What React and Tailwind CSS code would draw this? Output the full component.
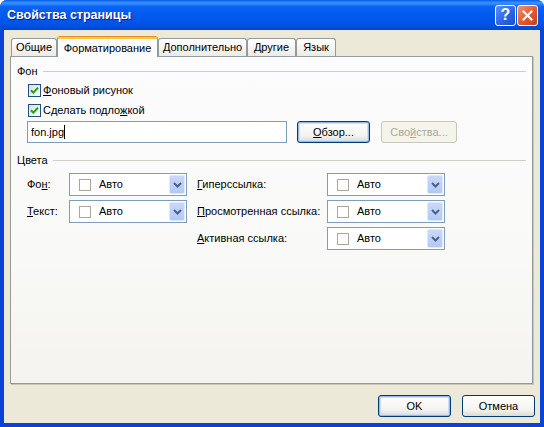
import React from 'react';

const font = "font-['Liberation_Sans',Arial,sans-serif]";

function Check() {
  return (
    <span className="w-[13px] h-[13px] border border-[#1C5180] bg-[linear-gradient(135deg,#DCDCD7_0%,#FFFFFF_100%)] flex items-center justify-center shrink-0">
      <svg width="9" height="9" viewBox="0 0 9 9">
        <path d="M1 4.2 L3.3 6.6 L8 1.8" fill="none" stroke="#21A121" strokeWidth="2" />
      </svg>
    </span>
  );
}

function Combo() {
  return (
    <div className="h-[23px] w-[118px] border border-[#7F9DB9] bg-white flex items-center p-px">
      <span className="ml-[8px] w-[12px] h-[12px] border border-[#ACA899] bg-white shrink-0" />
      <span className="ml-[8px] flex-1">Авто</span>
      <span className="w-[16px] h-full rounded-[2px] border border-[#E0E8FE] bg-[linear-gradient(to_bottom,#C9D8FC,#B2C9F6)] flex items-center justify-center">
        <svg width="9" height="6" viewBox="0 0 9 6">
          <path d="M1 1 L4.5 4.5 L8 1" fill="none" stroke="#4D6185" strokeWidth="2" />
        </svg>
      </span>
    </div>
  );
}

function Button({ children, disabled, def, w = 'w-[73px]' }) {
  return (
    <div
      className={
        'h-[22px] ' + w + ' rounded-[3px] border flex items-center justify-center ' +
        (disabled
          ? 'border-[#C9C7BA] bg-[#F5F4EA] text-[#ACA899]'
          : 'border-[#003C74] bg-[linear-gradient(to_bottom,#FFFFFF_0%,#F3F3EF_70%,#DCDAD0_100%)] text-black') +
        (def ? ' shadow-[inset_0_0_0_1px_#98B8EA,inset_0_0_0_2px_#CEDDF8]' : '')
      }
    >
      {children}
    </div>
  );
}

function Tab({ label, active, w }) {
  if (active) {
    return (
      <div className={'relative z-10 -mb-px h-[21px] ' + w + ' flex flex-col border-x border-[#919B9C] rounded-t-[3px] bg-[#FCFCFE] overflow-hidden'}>
        <div className="h-[3px] bg-[#FFC83C] border-t border-[#E68B2C]" />
        <div className="flex-1 flex items-center justify-center">{label}</div>
      </div>
    );
  }
  return (
    <div className={'h-[18px] ' + w + ' flex items-center justify-center border border-b-0 border-[#919B9C] rounded-t-[3px] bg-[linear-gradient(to_bottom,#FFFFFF,#ECEBE6)]'}>
      {label}
    </div>
  );
}

function Group({ title }) {
  return (
    <div className="h-[14px] flex items-center">
      <span>{title}</span>
      <span className="ml-[5px] flex-1 h-px bg-[#D0D0BF]" />
    </div>
  );
}

export default function App() {
  return (
    <div className={font + ' text-[11px] text-black w-[544px] h-[427px] flex flex-col bg-[#0842D6] rounded-t-[7px] overflow-hidden'}>
      {/* title bar */}
      <div className="h-[30px] shrink-0 flex items-center pl-[7px] pr-[6px] bg-[linear-gradient(to_bottom,#0A5DE8_0%,#3C93FF_10%,#0A63F4_22%,#0058EE_55%,#0054E6_80%,#0046CC_100%)]">
        <span className="flex-1 text-white font-bold text-[12.5px] [text-shadow:1px_1px_0_#0A1E8C]">Свойства страницы</span>
        <div className="flex gap-px">
          <div className="w-[21px] h-[21px] rounded-[3px] border border-white bg-[linear-gradient(135deg,#5E8FF5_0%,#2A62E4_60%,#1B4DCF_100%)] flex items-center justify-center text-white font-bold text-[16px] leading-none">?</div>
          <div className="w-[21px] h-[21px] rounded-[3px] border border-white bg-[linear-gradient(135deg,#F0946E_0%,#E2582F_55%,#C4401D_100%)] flex items-center justify-center">
            <svg width="11" height="11" viewBox="0 0 11 11">
              <path d="M1.5 1.5 L9.5 9.5 M9.5 1.5 L1.5 9.5" stroke="white" strokeWidth="2.2" strokeLinecap="square" />
            </svg>
          </div>
        </div>
      </div>

      {/* body */}
      <div className="flex-1 mx-[4px] mb-[4px] bg-[#ECE9D8] flex flex-col pt-[6px]">
        <div className="ml-[7px] flex items-end h-[20px]">
          <Tab label="Общие" w="w-[46px]" />
          <Tab label="Форматирование" active w="w-[101px]" />
          <Tab label="Дополнительно" w="w-[89px]" />
          <Tab label="Другие" w="w-[49px]" />
          <Tab label="Язык" w="w-[40px]" />
        </div>

        <div className="ml-[6px] w-[523px] h-[328px] border border-[#919B9C] shadow-[1px_1px_0_#C9C6B7] bg-[linear-gradient(to_bottom,#FCFCFE_0%,#F9F9F7_60%,#F4F3EE_100%)] px-[6px] pt-[7px]">
          <Group title="Фон" />
          <div className="mt-[2px] ml-[11px] h-[20px] flex items-center gap-[2px]">
            <Check />
            <span><u>Ф</u>оновый рисунок</span>
          </div>
          <div className="ml-[11px] h-[20px] flex items-center gap-[2px]">
            <Check />
            <span>Сделать подло<u>ж</u>кой</span>
          </div>
          <div className="mt-px ml-[10px] h-[22px] flex items-center">
            <div className="w-[260px] h-[22px] border border-[#7F9DB9] bg-white flex items-center pl-[3px]">
              fon.jpg<span className="w-px h-[14px] bg-black" />
            </div>
            <div className="ml-[10px]">
              <Button def><span><u>О</u>бзор...</span></Button>
            </div>
            <div className="ml-[11px]">
              <Button disabled w="w-[76px]"><span>Сво<u>й</u>ства...</span></Button>
            </div>
          </div>

          <div className="mt-[10px]">
            <Group title="Цвета" />
          </div>
          <div className="mt-[6px] ml-[10px] grid grid-cols-[42px_118px_140px_118px] gap-y-[4px] items-center">
            <span>Фо<u>н</u>:</span>
            <Combo />
            <span className="pl-[10px]"><u>Г</u>иперссылка:</span>
            <Combo />

            <span><u>Т</u>екст:</span>
            <Combo />
            <span className="pl-[10px]"><u>П</u>росмотренная ссылка:</span>
            <Combo />

            <span />
            <span />
            <span className="pl-[10px]"><u>А</u>ктивная ссылка:</span>
            <Combo />
          </div>
        </div>

        <div className="mt-[11px] flex justify-end gap-[11px] pr-[5px]">
          <Button def>OK</Button>
          <Button>Отмена</Button>
        </div>
      </div>
    </div>
  );
}
